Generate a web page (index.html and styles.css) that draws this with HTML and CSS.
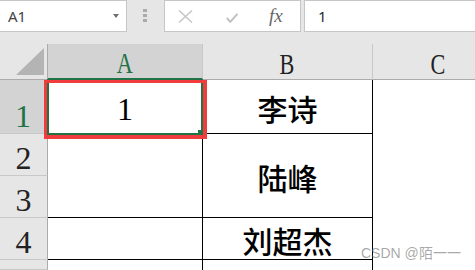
FILE: index.html
```html
<!DOCTYPE html>
<html lang="zh-CN">
<head>
    <meta charset="UTF-8">
    <title>Sheet</title>
    <link rel="stylesheet" href="styles.css">
</head>
<body>
    <div class="toolbar">
        <div class="name-box">
            <span>A1</span>
            <span class="caret"></span>
        </div>
        <div class="grip"><i></i><i></i><i></i></div>
        <div class="fx-box">
            <svg class="cancel" width="15" height="13" viewBox="0 0 15 13">
                <path d="M1 0.5L14 12.5M14 0.5L1 12.5" stroke="#c4c4c4" stroke-width="1.4" fill="none"/>
            </svg>
            <svg class="enter" width="12" height="10" viewBox="0 0 12 10">
                <path d="M0.8 5L4.3 8.8L11.4 0.8" stroke="#c2c2c2" stroke-width="2" fill="none"/>
            </svg>
            <span class="fx">fx</span>
        </div>
        <div class="formula">1</div>
    </div>

    <div class="sheet">
        <div class="head corner">
            <svg width="28" height="27" viewBox="0 0 28 27"><path d="M28 0V27H0Z" fill="#b4b4b4"/></svg>
        </div>
        <div class="head col active"><span>A</span></div>
        <div class="head col"><span>B</span></div>
        <div class="head col last"><span>C</span></div>

        <div class="head row active">1</div>
        <div class="cell box num">1</div>
        <div class="cell box">李诗</div>
        <div class="cell"></div>

        <div class="head row">2</div>
        <div class="cell box tall"></div>
        <div class="cell box tall">陆峰</div>
        <div class="cell"></div>
        <div class="head row">3</div>
        <div class="cell"></div>

        <div class="head row">4</div>
        <div class="cell box"></div>
        <div class="cell box">刘超杰</div>
        <div class="cell"></div>

        <div class="head row"></div>
        <div class="cell side"></div>
        <div class="cell side"></div>
        <div class="cell"></div>

        <div class="selection"><span class="handle"></span></div>
        <div class="mark"></div>
    </div>

    <div class="watermark">CSDN @陌一一</div>
</body>
</html>
```

FILE: styles.css
```css
body {
    margin: 0;
    width: 475px;
    height: 270px;
    overflow: hidden;
    background: #fff;
    position: relative;
}
.toolbar {
    display: flex;
    align-items: flex-start;
    height: 44px;
    background: #e6e6e6;
    font-family: "Noto Sans", sans-serif;
}
.name-box {
    box-sizing: border-box;
    width: 127px;
    height: 32px;
    display: flex;
    align-items: center;
    padding-left: 8px;
    background: #fff;
    border: 1px solid #c6c6c6;
    border-left: 0;
    font-size: 15px;
    color: #444;
}
.caret {
    margin-left: auto;
    margin-right: 7px;
    width: 0;
    height: 0;
    border-left: 3.5px solid transparent;
    border-right: 3.5px solid transparent;
    border-top: 4px solid #707070;
}
.grip {
    display: flex;
    flex-direction: column;
    gap: 2px;
    margin: 9px 0 0 16px;
}
.grip i {
    display: block;
    width: 4px;
    height: 3px;
    background: #ababab;
}
.fx-box {
    box-sizing: border-box;
    width: 137px;
    height: 32px;
    margin-left: 17px;
    display: flex;
    align-items: center;
    padding-left: 13px;
    background: #fff;
    border: 1px solid #c6c6c6;
}
.enter {
    margin-left: 33px;
    margin-top: 3px;
}
.fx {
    margin-left: 31px;
    font-family: "Liberation Serif", serif;
    font-style: italic;
    font-size: 19px;
    color: #666;
}
.formula {
    box-sizing: border-box;
    flex: 1;
    height: 32px;
    margin-left: 3px;
    padding-left: 13px;
    display: flex;
    align-items: center;
    background: #fff;
    border: 1px solid #c6c6c6;
    border-right: 0;
    font-size: 15px;
    color: #1c2a3c;
}
.sheet {
    position: relative;
    display: grid;
    grid-template-columns: 48px 155px 170px 1fr;
    grid-template-rows: 36px 54px 42px 42px 42px 10px;
}
.head {
    box-sizing: border-box;
    display: flex;
    align-items: flex-end;
    justify-content: center;
    background: #e6e6e6;
    font-family: "Liberation Serif", serif;
    line-height: 1;
    color: #222;
}
.corner {
    justify-content: flex-end;
    padding: 0 3px 4px 0;
    border-right: 1px solid #ababab;
    border-bottom: 1px solid #ababab;
}
.col {
    font-size: 30px;
    border-right: 1px solid #c8c8c8;
    border-bottom: 1px solid #ababab;
}
.col.last {
    padding-left: 28px;
    border-right: 0;
}
.col span {
    display: inline-block;
    transform: scaleX(0.74);
}
.row {
    font-size: 32px;
    padding-bottom: 1px;
    border-right: 1px solid #ababab;
    border-bottom: 1px solid #c8c8c8;
}
.head.active {
    background: #d3d3d3;
    color: #217346;
}
.col.active {
    border-bottom: 2px solid #217346;
}
.row.active {
    border-right: 2px solid #217346;
}
.cell {
    box-sizing: border-box;
    display: flex;
    align-items: center;
    justify-content: center;
    padding-top: 2px;
    font-family: "Noto Sans CJK SC", sans-serif;
    font-size: 30px;
    font-weight: 500;
    line-height: 1;
    color: #000;
}
.box {
    border-right: 1px solid #000;
    border-bottom: 1px solid #000;
}
.side {
    border-right: 1px solid #000;
}
.tall {
    grid-row: span 2;
}
.num {
    font-family: "Liberation Serif", serif;
    font-size: 32px;
    font-weight: 400;
    padding-top: 4px;
}
.selection {
    position: absolute;
    left: 47px;
    top: 35px;
    width: 156px;
    height: 56px;
    box-sizing: border-box;
    border: 2px solid #217346;
}
.handle {
    position: absolute;
    right: -3px;
    bottom: -3px;
    width: 6px;
    height: 6px;
    background: #217346;
}
.mark {
    position: absolute;
    left: 44px;
    top: 36px;
    width: 163px;
    height: 59px;
    box-sizing: border-box;
    border: solid #ef3d3d;
    border-width: 3px 4px 4px 3px;
}
.watermark {
    position: absolute;
    left: 361px;
    top: 246px;
    font-family: "Liberation Sans", sans-serif;
    font-size: 14px;
    line-height: 14px;
    color: rgba(110, 110, 110, 0.6);
}
```
